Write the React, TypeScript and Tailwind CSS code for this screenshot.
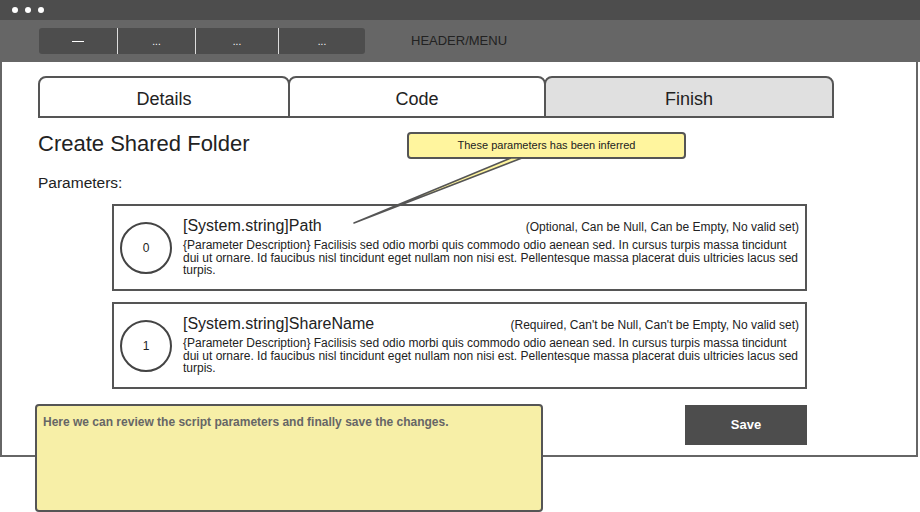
import React from 'react'

const params = [
  {
    index: 0,
    name: '[System.string]Path',
    flags: '(Optional, Can be Null, Can be Empty, No valid set)',
  },
  {
    index: 1,
    name: '[System.string]ShareName',
    flags: "(Required, Can't be Null, Can't be Empty, No valid set)",
  },
]

const description =
  '{Parameter Description} Facilisis sed odio morbi quis commodo odio aenean sed. In cursus turpis massa tincidunt dui ut ornare. Id faucibus nisl tincidunt eget nullam non nisi est. Pellentesque massa placerat duis ultricies lacus sed turpis.'

const tabs = [
  { label: 'Details', width: 'w-[252px]', active: false },
  { label: 'Code', width: 'w-[258px]', active: false },
  { label: 'Finish', width: 'w-[290px]', active: true },
]

const App: React.FC = () => {
  return (
    <div
      className="relative w-[920px] h-[512px] bg-white overflow-hidden text-[#222]"
      style={{ fontFamily: '"Liberation Sans", Arial, sans-serif' }}
    >
      {/* window bar */}
      <div className="h-[20px] bg-[#4d4d4d] flex items-center gap-[7px] pl-[12px]">
        <span className="w-[6px] h-[6px] rounded-full bg-white" />
        <span className="w-[6px] h-[6px] rounded-full bg-white" />
        <span className="w-[6px] h-[6px] rounded-full bg-white" />
      </div>

      {/* header / menu */}
      <div className="h-[42px] bg-[#666666] flex items-center pl-[39px]">
        <div className="flex h-[26px] w-[326px] bg-[#4d4d4d] rounded-[3px] text-white text-[10px]">
          <div className="w-[79px] flex items-center justify-center border-r border-[#ddd]">
            <span className="block w-[12px] h-px bg-white" />
          </div>
          <div className="w-[78px] flex items-center justify-center border-r border-[#ddd]">...</div>
          <div className="w-[83px] flex items-center justify-center border-r border-[#ddd]">...</div>
          <div className="flex-1 flex items-center justify-center">...</div>
        </div>
        <div className="ml-[46px] text-[13px] text-[#222]">HEADER/MENU</div>
      </div>

      {/* content */}
      <div className="relative w-[918px] h-[395px] border-x-2 border-b-2 border-[#666] pl-[36px] pt-[14px]">
        <div className="flex">
          {tabs.map((tab, i) => (
            <div
              key={tab.label}
              className={`${tab.width} ${i > 0 ? '-ml-[2px]' : ''} h-[42px] rounded-t-[8px] border-2 border-[#555] flex items-center justify-center pt-[4px] text-[18px] ${
                tab.active ? 'bg-[#e0e0e0]' : 'bg-white'
              }`}
            >
              {tab.label}
            </div>
          ))}
        </div>

        <h1 className="mt-[12px] text-[22px] leading-[28px]">Create Shared Folder</h1>
        <div className="mt-[16px] text-[15.5px] leading-[18px]">Parameters:</div>

        <div className="ml-[74px] mt-[12px] flex flex-col gap-[11px]">
          {params.map((p) => (
            <div
              key={p.index}
              className="w-[695px] h-[87px] border-2 border-[#555] flex items-center pl-[6px] pr-[6px]"
            >
              <div className="w-[52px] h-[52px] shrink-0 rounded-full border-2 border-[#444] flex items-center justify-center text-[12px]">
                {p.index}
              </div>
              <div className="ml-[11px] flex-1 self-start pt-[10px]">
                <div className="flex items-baseline justify-between">
                  <span className="text-[16px] leading-[20px]">{p.name}</span>
                  <span className="text-[12px]">{p.flags}</span>
                </div>
                <p className="mt-[3px] text-[12px] leading-[12.5px]">{description}</p>
              </div>
            </div>
          ))}
        </div>

        <div className="flex justify-end pr-[109px] mt-[16px]">
          <button className="w-[122px] h-[40px] bg-[#4d4d4d] text-white font-bold text-[13px]">
            Save
          </button>
        </div>

        {/* inferred tooltip */}
        <div className="absolute left-[405px] top-[70px] w-[279px] h-[27px] bg-[#fff59e] border-2 border-[#555] rounded-[4px] flex items-center justify-center text-[11px] text-[#222]">
          These parameters has been inferred
        </div>
      </div>

      {/* callout line */}
      <svg className="absolute left-0 top-0 pointer-events-none" width="920" height="512">
        <polygon
          points="511,158 522,158 354,223"
          fill="#fff59e"
          stroke="#555"
          strokeWidth="1.5"
          strokeLinejoin="round"
        />
      </svg>

      {/* review note */}
      <div className="absolute left-[35px] top-[404px] w-[508px] h-[108px] bg-[#f7efa7] border-2 border-[#555] rounded-[4px] px-[6px] pt-[7px] text-[12px] font-bold text-[#666]">
        Here we can review the script parameters and finally save the changes.
      </div>
    </div>
  )
}

export default App
